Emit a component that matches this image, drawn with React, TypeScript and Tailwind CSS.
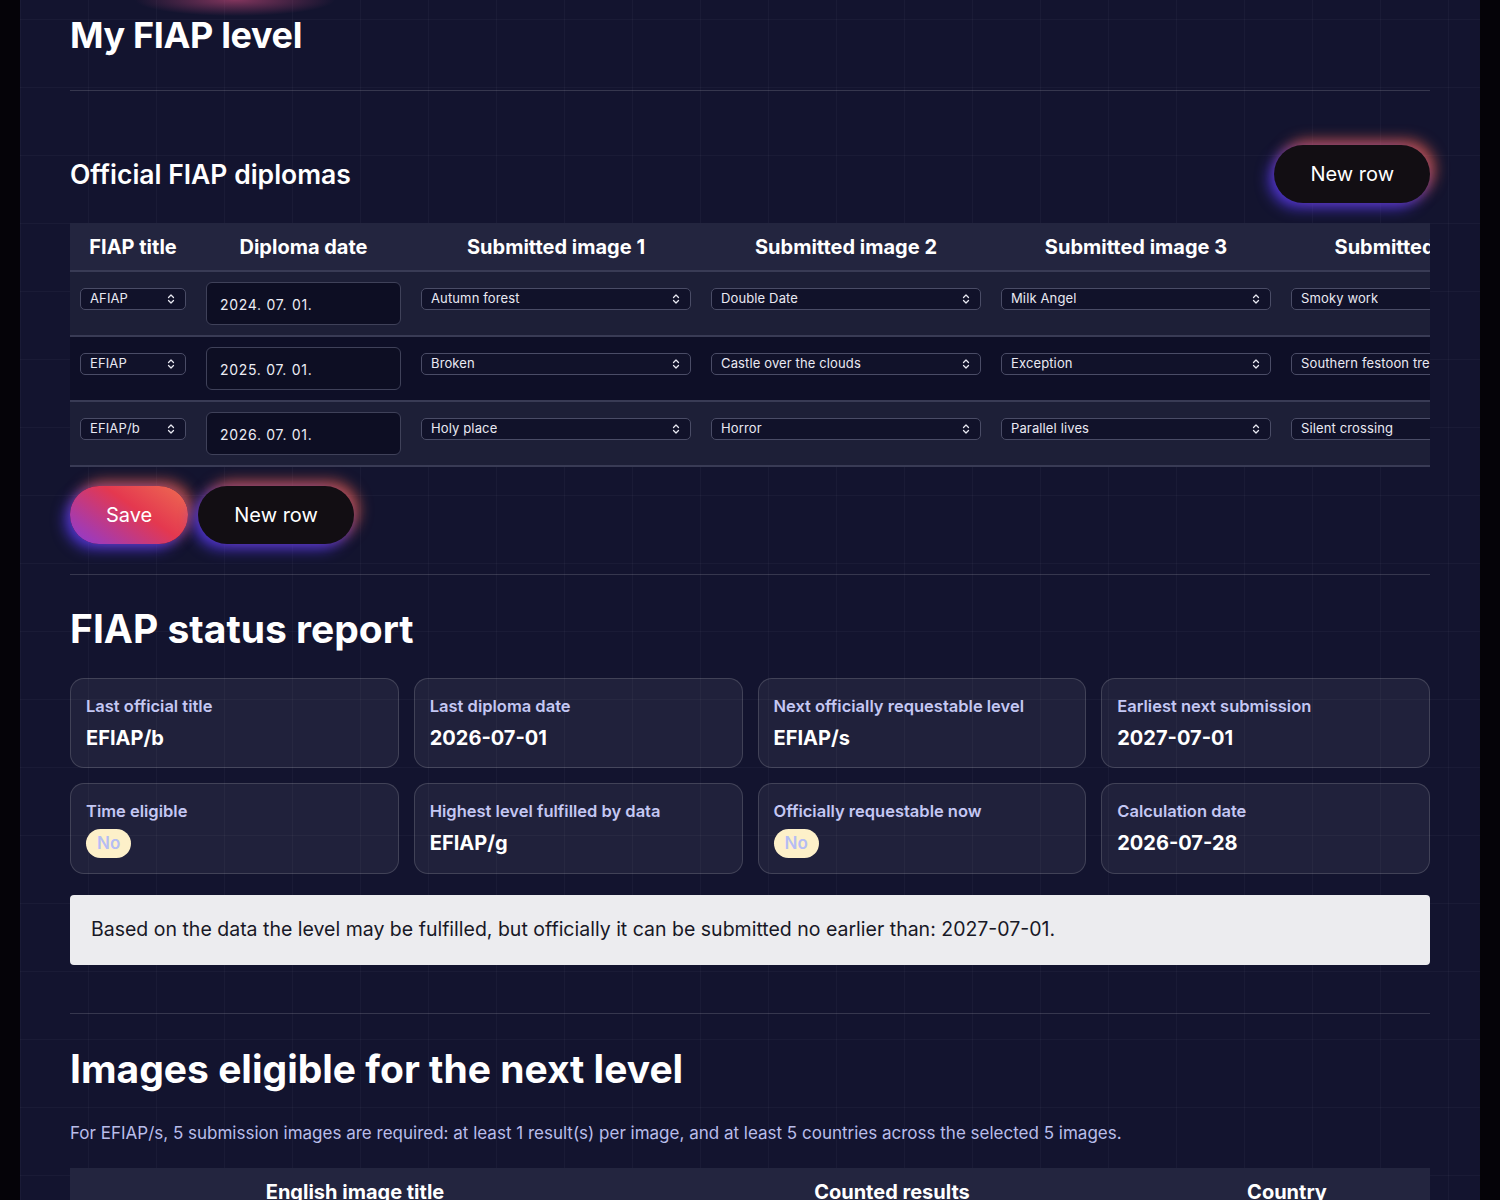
import { ChevronsUpDown } from "lucide-react"

interface DiplomaRow {
  title: string
  date: string
  images: string[]
}

const diplomaRows: DiplomaRow[] = [
  { title: "AFIAP", date: "2024. 07. 01.", images: ["Autumn forest", "Double Date", "Milk Angel", "Smoky work", "Morning mist"] },
  { title: "EFIAP", date: "2025. 07. 01.", images: ["Broken", "Castle over the clouds", "Exception", "Southern festoon tree", "Lonely road"] },
  { title: "EFIAP/b", date: "2026. 07. 01.", images: ["Holy place", "Horror", "Parallel lives", "Silent crossing", "Old harbour"] },
]

const statusCards = [
  { label: "Last official title", value: "EFIAP/b" },
  { label: "Last diploma date", value: "2026-07-01" },
  { label: "Next officially requestable level", value: "EFIAP/s" },
  { label: "Earliest next submission", value: "2027-07-01" },
  { label: "Time eligible", badge: "No" },
  { label: "Highest level fulfilled by data", value: "EFIAP/g" },
  { label: "Officially requestable now", badge: "No" },
  { label: "Calculation date", value: "2026-07-28" },
]

const glow =
  "shadow-[-5px_5px_14px_rgba(90,60,255,0.75),5px_-5px_14px_rgba(255,105,80,0.7)]"

function FakeSelect({ value }: { value: string }) {
  return (
    <div className="mt-[6px] flex h-[22px] w-full items-center justify-between overflow-hidden rounded-[5px] border border-[#4a4c66] bg-[#11122a] pl-[9px] pr-2 text-[13px] tracking-[0.01em] text-[#e9e9f2]">
      <span className="truncate whitespace-nowrap">{value}</span>
      <ChevronsUpDown className="ml-2 h-3 w-3 shrink-0 text-[#e9e9f2]" strokeWidth={2.5} />
    </div>
  )
}

function Divider() {
  return <div className="h-px w-full bg-white/15" />
}

export default function App() {
  return (
    <div className="min-h-screen w-full bg-[#050308] px-5 font-['Inter','Noto_Sans',sans-serif] text-white">
      <div className="min-h-screen bg-[#13142f] bg-[radial-gradient(ellipse_100px_16px_at_215px_0px,rgba(220,80,130,0.55),transparent),linear-gradient(rgba(255,255,255,0.03)_1px,transparent_1px),linear-gradient(90deg,rgba(255,255,255,0.03)_1px,transparent_1px)] [background-size:100%_100%,68px_68px,68px_68px] [background-position:0_0,0_19px,0_0] px-[50px] pt-[15px] pb-20">
        <h1 className="text-[36px] font-bold leading-10 tracking-[-0.01em]">My FIAP level</h1>

        <div className="mt-[35px]">
          <Divider />
        </div>

        <div className="mt-[54px] flex items-center justify-between">
          <h3 className="text-[26.5px] font-semibold leading-8">Official FIAP diplomas</h3>
          <button className={`h-[58px] rounded-full bg-[#120e13] px-9 text-xl text-white ${glow}`}>New row</button>
        </div>

        <div className="mt-5 w-full overflow-hidden">
          <table className="w-[1791px] table-fixed border-collapse">
            <thead>
              <tr className="border-b-2 border-[#393b55] bg-[#23253f]">
                <th className="w-[126px] pt-2.5 pb-[9px] text-center text-xl font-bold leading-7">FIAP title</th>
                <th className="w-[215px] pt-2.5 pb-[9px] text-center text-xl font-bold leading-7">Diploma date</th>
                {[1, 2, 3, 4, 5].map((n) => (
                  <th key={n} className="w-[290px] whitespace-nowrap pt-2.5 pb-[9px] text-center text-xl font-bold leading-7">
                    Submitted image {n}
                  </th>
                ))}
              </tr>
            </thead>
            <tbody>
              {diplomaRows.map((row, i) => (
                <tr
                  key={row.title}
                  className={`border-b-2 border-[#393b55] ${i % 2 === 1 ? "bg-[#0e0f27]" : "bg-[#1d1f37]"}`}
                >
                  <td className="px-2.5 py-2.5 align-top">
                    <FakeSelect value={row.title} />
                  </td>
                  <td className="px-2.5 py-2.5 align-top">
                    <div className="flex h-[43px] items-center rounded-md border border-[#3f4159] bg-[#0d0e23] px-[13px] pt-0.5 text-[14px] tracking-[0.05em] text-[#ececf4]">
                      {row.date}
                    </div>
                  </td>
                  {row.images.map((img) => (
                    <td key={img} className="px-2.5 py-2.5 align-top">
                      <FakeSelect value={img} />
                    </td>
                  ))}
                </tr>
              ))}
            </tbody>
          </table>
        </div>

        <div className="mt-[19px] flex gap-2.5">
          <button
            className={`h-[58px] rounded-full bg-[linear-gradient(35deg,#8a3bd8_0%,#e4384f_58%,#ee6d52_100%)] px-9 text-xl text-white ${glow}`}
          >
            Save
          </button>
          <button className={`h-[58px] rounded-full bg-[#120e13] px-9 text-xl text-white ${glow}`}>New row</button>
        </div>

        <div className="mt-[30px]">
          <Divider />
        </div>

        <h2 className="mt-[32px] text-[39px] font-bold leading-[44px]">FIAP status report</h2>

        <div className="mt-[27px] grid grid-cols-4 gap-[15px]">
          {statusCards.map((card) => (
            <div key={card.label} className="rounded-[14px] border border-white/15 bg-white/[0.06] px-[15px] py-[15px]">
              <div className="text-[16.5px] font-semibold leading-6 text-[#c4c7f3]">{card.label}</div>
              {card.badge ? (
                <div className="mt-[6px] inline-flex h-[29px] items-center rounded-full bg-[#fdf0c9] px-[11px] text-[17px] font-semibold text-[#b5bdf4]">
                  {card.badge}
                </div>
              ) : (
                <div className="mt-[6px] text-xl font-bold leading-7 text-white">{card.value}</div>
              )}
            </div>
          ))}
        </div>

        <div className="mt-[21px] flex h-[70px] items-center rounded-[4px] bg-[#ececef] px-[21px] text-[19.5px] text-[#181826]">
          Based on the data the level may be fulfilled, but officially it can be submitted no earlier than: 2027-07-01.
        </div>

        <div className="mt-[48px]">
          <Divider />
        </div>

        <h2 className="mt-[33px] text-[39px] font-bold leading-[44px]">Images eligible for the next level</h2>

        <p className="mt-[30px] text-[17px] leading-6 text-[#b9bdea]">
          For EFIAP/s, 5 submission images are required: at least 1 result(s) per image, and at least 5 countries across the selected 5 images.
        </p>

        <table className="mt-[23px] w-full table-fixed border-collapse">
          <thead>
            <tr className="border-b-2 border-[#393b55] bg-[#23253f]">
              <th className="w-[570px] py-2.5 text-center text-xl font-bold leading-7">English image title</th>
              <th className="w-[504px] py-2.5 text-center text-xl font-bold leading-7">Counted results</th>
              <th className="py-2.5 text-center text-xl font-bold leading-7">Country</th>
            </tr>
          </thead>
          <tbody>
            <tr className="border-b-2 border-[#393b55] bg-[#1d1f37]">
              <td className="px-2.5 py-3 text-center text-[15px]">Autumn forest</td>
              <td className="px-2.5 py-3 text-center text-[15px]">3</td>
              <td className="px-2.5 py-3 text-center text-[15px]">Hungary</td>
            </tr>
          </tbody>
        </table>
      </div>
    </div>
  )
}
